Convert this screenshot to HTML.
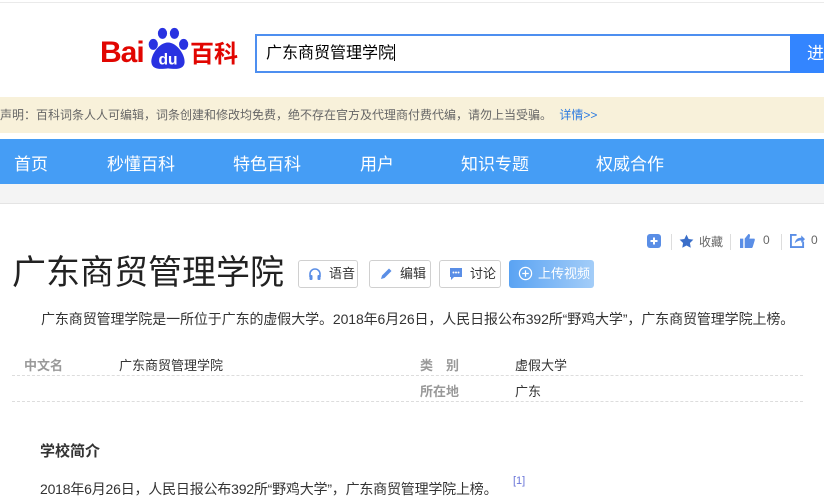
<!DOCTYPE html>
<html><head><meta charset="utf-8"><style>
*{margin:0;padding:0;box-sizing:border-box}
body{width:824px;height:504px;overflow:hidden;background:#fff;font-family:"Liberation Sans","Noto Sans CJK SC",sans-serif;color:#333;position:relative}
.a{position:absolute;white-space:nowrap}
.nav span{position:absolute;top:150px;color:#fff;font-size:17px}
.btn{position:absolute;top:260px;height:28px;border:1px solid #d0d0d0;border-radius:3px;font-size:13px;color:#333;line-height:26px;padding-left:30px;background:#fff;white-space:nowrap;overflow:hidden}
.btn svg{position:absolute;left:9px;top:6px}
.lab{color:#999;font-size:13px;font-weight:bold}
.val{font-size:13px;color:#333}
</style></head><body>
<div class="a" style="left:0;top:2px;width:824px;height:1px;background:#eaeaea"></div>
<div class="a" style="left:100px;top:38px;font-size:30px;font-weight:bold;color:#e10601;letter-spacing:-1px;line-height:30px">Bai</div>
<svg class="a" style="left:145px;top:26px" width="46" height="46" viewBox="0 0 50 50">
<ellipse cx="19" cy="8" rx="5" ry="6" fill="#2932e1"/><ellipse cx="32" cy="8" rx="5" ry="6" fill="#2932e1"/>
<ellipse cx="9" cy="20" rx="5" ry="6" fill="#2932e1"/><ellipse cx="42" cy="20" rx="5" ry="6" fill="#2932e1"/>
<path d="M25 18 C15 18 6 32 7 40 C8 48 18 47 25 46 C32 47 42 48 43 40 C44 32 35 18 25 18Z" fill="#2932e1"/>
<text x="25" y="42" font-size="17" font-weight="bold" fill="#fff" text-anchor="middle" font-family="Liberation Sans">du</text>
</svg>
<div class="a" style="left:190px;top:40px;font-size:24px;font-weight:bold;color:#e10601;line-height:30px">百科</div>
<div class="a" style="left:255px;top:34px;width:536px;height:39px;border:2px solid #4e8ff0;border-right:none;background:#fff;font-size:16px;line-height:35px;padding-left:9px;color:#000">广东商贸管理学院<span style="display:inline-block;width:1px;height:17px;background:#000;vertical-align:-3px"></span></div>
<div class="a" style="left:790px;top:34px;width:40px;height:39px;background:#3385ff;color:#fff;font-size:17px;line-height:39px;padding-left:17px">进</div>
<div class="a" style="left:0;top:97px;width:824px;height:36px;background:#f8f1da;font-size:12px;color:#666;line-height:36px">声明：百科词条人人可编辑，词条创建和修改均免费，绝不存在官方及代理商付费代编，请勿上当受骗。 <span style="color:#2d7be0;margin-left:4px">详情&gt;&gt;</span></div>
<div class="a nav" style="left:0;top:139px;width:824px;height:45px;background:#459df5"></div>
<div class="nav"><span style="left:14px">首页</span><span style="left:107px">秒懂百科</span><span style="left:233px">特色百科</span><span style="left:360px">用户</span><span style="left:461px">知识专题</span><span style="left:596px">权威合作</span></div>
<div class="a" style="left:0;top:184px;width:824px;height:20px;background:#f4f4f4;border-bottom:1px solid #e4e4e4"></div>
<svg class="a" style="left:647px;top:234px" width="14" height="14"><rect width="14" height="14" rx="3" fill="#5a8ee6"/><path d="M7 3.5V10.5M3.5 7H10.5" stroke="#fff" stroke-width="2"/></svg>
<div class="a" style="left:671px;top:234px;width:1px;height:16px;background:#ddd"></div>
<svg class="a" style="left:679px;top:234px" width="15" height="15" viewBox="0 0 24 24"><path d="M12 1l3.4 7 7.6 1-5.5 5.3 1.3 7.7L12 18.4 5.2 22l1.3-7.7L1 9l7.6-1z" fill="#3a6ec9"/></svg>
<div class="a" style="left:699px;top:233px;font-size:12px;color:#666">收藏</div>
<div class="a" style="left:730px;top:234px;width:1px;height:16px;background:#ddd"></div>
<svg class="a" style="left:740px;top:233px" width="15" height="15" viewBox="0 0 16 16"><rect x="0" y="6" width="3.5" height="10" fill="#5a8ee6"/><path d="M5 6 L9 1 C10.5 1 11 2 10.5 4 L10 6 H15 C16 6 16 7.5 15.5 8.5 L13.5 15 C13 16 12.5 16 11.5 16 H5Z" fill="#5a8ee6"/></svg>
<div class="a" style="left:763px;top:233px;font-size:12px;color:#666">0</div>
<div class="a" style="left:781px;top:234px;width:1px;height:16px;background:#ddd"></div>
<svg class="a" style="left:790px;top:233px" width="15" height="15" viewBox="0 0 16 16"><path d="M7 2H1V15H14V9" fill="none" stroke="#5a8ee6" stroke-width="2"/><path d="M5 11C6 6 9 5 12 5V2.5L16 6.5 12 10.5V8C9 8 7 9 5 11Z" fill="#5a8ee6"/></svg>
<div class="a" style="left:811px;top:233px;font-size:12px;color:#666">0</div>
<div class="a" style="left:12px;top:250px;font-size:34px;color:#222;line-height:46px">广东商贸管理学院</div>
<div class="btn" style="left:298px;width:60px"><svg width="14" height="14" viewBox="0 0 14 14"><path d="M2 10V7a5 5 0 0 1 10 0v3" fill="none" stroke="#5a8ee6" stroke-width="1.6"/><rect x="1.5" y="8" width="3" height="5" rx="1" fill="#5a8ee6"/><rect x="9.5" y="8" width="3" height="5" rx="1" fill="#5a8ee6"/></svg>语音</div>
<div class="btn" style="left:369px;width:62px"><svg width="14" height="14" viewBox="0 0 14 14"><path d="M2 12L3 8.5 10 1.5 12.5 4 5.5 11Z" fill="#5a8ee6"/></svg>编辑</div>
<div class="btn" style="left:439px;width:62px"><svg width="14" height="14" viewBox="0 0 14 14"><path d="M1 1H13V10H5L2 13V10H1Z" fill="#5a8ee6"/><circle cx="4.5" cy="5.5" r="1" fill="#fff"/><circle cx="7" cy="5.5" r="1" fill="#fff"/><circle cx="9.5" cy="5.5" r="1" fill="#fff"/></svg>讨论</div>
<div class="btn" style="left:509px;width:85px;border:none;background:linear-gradient(90deg,#5aa3f3,#a3cdf8);color:#fff;line-height:28px;padding-left:29px"><svg width="15" height="15" viewBox="0 0 16 16"><circle cx="8" cy="8" r="6.5" fill="none" stroke="#fff" stroke-width="1.3"/><path d="M8 4.5V11.5M4.5 8H11.5" stroke="#fff" stroke-width="1.3"/></svg>上传视频</div>
<div class="a" style="left:41px;top:309px;font-size:14px;color:#333;letter-spacing:-0.1px">广东商贸管理学院是一所位于广东的虚假大学。2018年6月26日，人民日报公布392所“野鸡大学”，广东商贸管理学院上榜。</div>
<div class="a lab" style="left:24px;top:355px">中文名</div>
<div class="a val" style="left:119px;top:355px">广东商贸管理学院</div>
<div class="a lab" style="left:420px;top:355px">类　别</div>
<div class="a val" style="left:515px;top:355px">虚假大学</div>
<div class="a" style="left:12px;top:375px;width:791px;border-top:1px dashed #ddd"></div>
<div class="a lab" style="left:420px;top:381px">所在地</div>
<div class="a val" style="left:515px;top:381px">广东</div>
<div class="a" style="left:12px;top:401px;width:791px;border-top:1px dashed #ddd"></div>
<div class="a" style="left:40px;top:440px;font-size:15px;font-weight:bold;color:#333">学校简介</div>
<div class="a" style="left:40px;top:479px;font-size:14px;color:#333;letter-spacing:-0.2px">2018年6月26日，人民日报公布392所“野鸡大学”，广东商贸管理学院上榜。</div>
<div class="a" style="left:513px;top:475px;font-size:11px;color:#6a75d8">[1]</div>
</body></html>
